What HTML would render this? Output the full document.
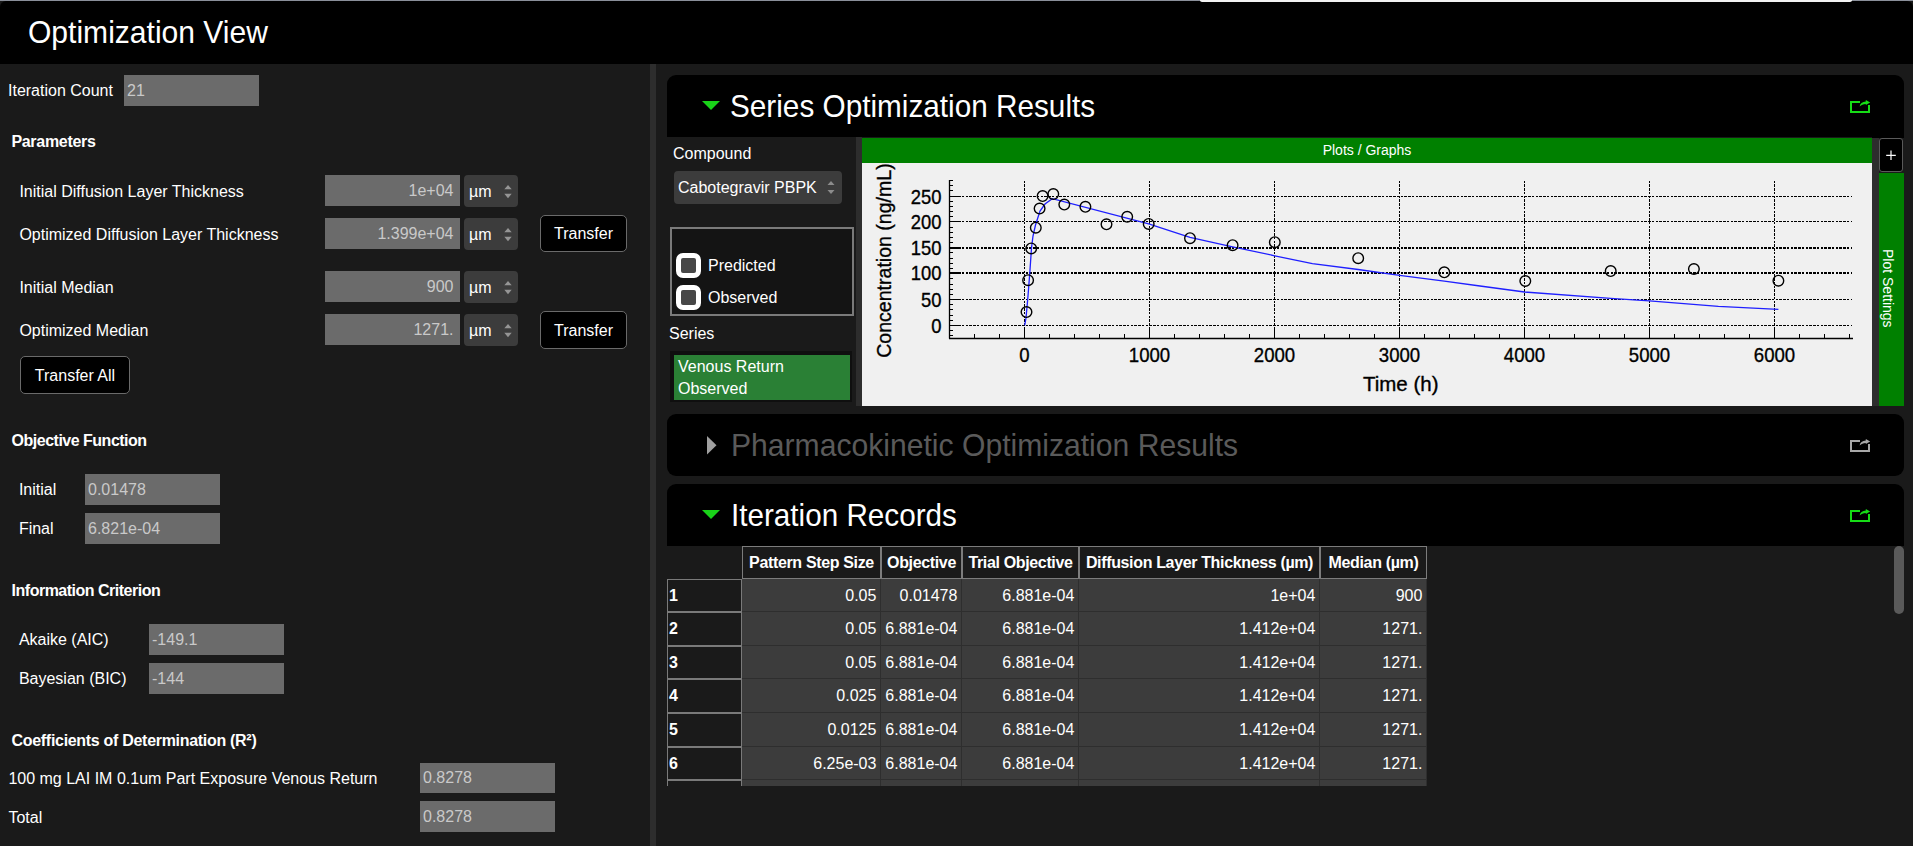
<!DOCTYPE html>
<html><head><meta charset="utf-8"><title>Optimization View</title>
<style>
html,body{margin:0;padding:0;}
body{width:1913px;height:846px;overflow:hidden;background:#1a1a1a;position:relative;font-family:"Liberation Sans",sans-serif;}
body div, body svg{position:absolute;}
.t{line-height:1;white-space:nowrap;}
svg text{font-family:"Liberation Sans",sans-serif;}
</style></head><body>
<div style="left:0px;top:0px;width:1913px;height:1px;background:#8a8f9a"></div>
<div style="left:1200px;top:0px;width:652px;height:2px;background:#f2f2f2;border-radius:0 0 2px 2px"></div>
<div style="left:0px;top:1px;width:1913px;height:63px;background:#000;border-radius:6px 6px 0 0"></div>
<div style="left:1200px;top:0px;width:652px;height:2px;background:#f2f2f2;border-radius:0 0 3px 3px"></div>
<div class="t" style="left:28px;top:16.31px;font-size:32px;color:#fff;font-weight:400;transform:scaleX(0.939);transform-origin:0 0">Optimization View</div>
<div class="t" style="left:8px;top:83.16px;font-size:16px;color:#fff;font-weight:400;">Iteration Count</div>
<div style="left:124px;top:75px;width:135px;height:31px;background:#6b6b6b"></div>
<div class="t" style="left:127px;top:82.96px;font-size:16px;color:#c9c9c9;font-weight:400;">21</div>
<div class="t" style="left:11.4px;top:134.36px;font-size:16px;color:#fff;font-weight:700;letter-spacing:-0.3px">Parameters</div>
<div class="t" style="left:19.4px;top:184.46px;font-size:16px;color:#fff;font-weight:400;">Initial Diffusion Layer Thickness</div>
<div style="left:325px;top:175px;width:135px;height:31px;background:#6b6b6b"></div>
<div class="t" style="right:1459.5px;top:182.96px;font-size:16px;color:#c9c9c9;font-weight:400;">1e+04</div>
<div style="left:464px;top:175px;width:54px;height:32px;background:#3c3c3c;border-radius:4px"></div>
<div class="t" style="left:469px;top:184.26px;font-size:16px;color:#fff;font-weight:400;">&micro;m</div>
<svg style="left:503.5px;top:184.5px" width="8" height="14"><path d="M0.3 4.2 L4 0 L7.7 4.2Z M0.3 8.8 L4 13.2 L7.7 8.8Z" fill="#959595"/></svg>
<div class="t" style="left:19.4px;top:226.66px;font-size:16px;color:#fff;font-weight:400;">Optimized Diffusion Layer Thickness</div>
<div style="left:325px;top:218px;width:135px;height:31px;background:#6b6b6b"></div>
<div class="t" style="right:1459.5px;top:225.96px;font-size:16px;color:#c9c9c9;font-weight:400;">1.399e+04</div>
<div style="left:464px;top:218px;width:54px;height:32px;background:#3c3c3c;border-radius:4px"></div>
<div class="t" style="left:469px;top:227.26px;font-size:16px;color:#fff;font-weight:400;">&micro;m</div>
<svg style="left:503.5px;top:227.5px" width="8" height="14"><path d="M0.3 4.2 L4 0 L7.7 4.2Z M0.3 8.8 L4 13.2 L7.7 8.8Z" fill="#959595"/></svg>
<div style="left:540px;top:215px;width:87px;height:37px;background:#000;border:1px solid #6a6a6a;border-radius:5px;box-sizing:border-box"></div>
<div class="t" style="left:283.5px;width:600px;text-align:center;top:225.96px;font-size:16px;color:#fff;font-weight:400;">Transfer</div>
<div class="t" style="left:19.4px;top:280.06px;font-size:16px;color:#fff;font-weight:400;">Initial Median</div>
<div style="left:325px;top:271px;width:135px;height:31px;background:#6b6b6b"></div>
<div class="t" style="right:1459.5px;top:278.96px;font-size:16px;color:#c9c9c9;font-weight:400;">900</div>
<div style="left:464px;top:271px;width:54px;height:32px;background:#3c3c3c;border-radius:4px"></div>
<div class="t" style="left:469px;top:280.26px;font-size:16px;color:#fff;font-weight:400;">&micro;m</div>
<svg style="left:503.5px;top:280.5px" width="8" height="14"><path d="M0.3 4.2 L4 0 L7.7 4.2Z M0.3 8.8 L4 13.2 L7.7 8.8Z" fill="#959595"/></svg>
<div class="t" style="left:19.4px;top:323.16px;font-size:16px;color:#fff;font-weight:400;">Optimized Median</div>
<div style="left:325px;top:314px;width:135px;height:31px;background:#6b6b6b"></div>
<div class="t" style="right:1459.5px;top:321.96px;font-size:16px;color:#c9c9c9;font-weight:400;">1271.</div>
<div style="left:464px;top:314px;width:54px;height:32px;background:#3c3c3c;border-radius:4px"></div>
<div class="t" style="left:469px;top:323.26px;font-size:16px;color:#fff;font-weight:400;">&micro;m</div>
<svg style="left:503.5px;top:323.5px" width="8" height="14"><path d="M0.3 4.2 L4 0 L7.7 4.2Z M0.3 8.8 L4 13.2 L7.7 8.8Z" fill="#959595"/></svg>
<div style="left:540px;top:311px;width:87px;height:38px;background:#000;border:1px solid #6a6a6a;border-radius:5px;box-sizing:border-box"></div>
<div class="t" style="left:283.5px;width:600px;text-align:center;top:323.06px;font-size:16px;color:#fff;font-weight:400;">Transfer</div>
<div style="left:20px;top:356px;width:110px;height:38px;background:#000;border:1px solid #6a6a6a;border-radius:5px;box-sizing:border-box"></div>
<div class="t" style="left:-225.0px;width:600px;text-align:center;top:368.06px;font-size:16px;color:#fff;font-weight:400;">Transfer All</div>
<div class="t" style="left:11.6px;top:432.76px;font-size:16px;color:#fff;font-weight:700;letter-spacing:-0.5px">Objective Function</div>
<div class="t" style="left:18.9px;top:481.76px;font-size:16px;color:#fff;font-weight:400;">Initial</div>
<div style="left:85px;top:474px;width:135px;height:31px;background:#6b6b6b"></div>
<div class="t" style="left:88px;top:481.96px;font-size:16px;color:#c9c9c9;font-weight:400;">0.01478</div>
<div class="t" style="left:18.9px;top:521.46px;font-size:16px;color:#fff;font-weight:400;">Final</div>
<div style="left:85px;top:513px;width:135px;height:31px;background:#6b6b6b"></div>
<div class="t" style="left:88px;top:520.96px;font-size:16px;color:#c9c9c9;font-weight:400;">6.821e-04</div>
<div class="t" style="left:11.6px;top:583.46px;font-size:16px;color:#fff;font-weight:700;letter-spacing:-0.5px">Information Criterion</div>
<div class="t" style="left:18.9px;top:632.46px;font-size:16px;color:#fff;font-weight:400;">Akaike (AIC)</div>
<div style="left:149px;top:624px;width:135px;height:31px;background:#6b6b6b"></div>
<div class="t" style="left:152px;top:631.96px;font-size:16px;color:#c9c9c9;font-weight:400;">-149.1</div>
<div class="t" style="left:18.9px;top:671.46px;font-size:16px;color:#fff;font-weight:400;">Bayesian (BIC)</div>
<div style="left:149px;top:663px;width:135px;height:31px;background:#6b6b6b"></div>
<div class="t" style="left:152px;top:670.96px;font-size:16px;color:#c9c9c9;font-weight:400;">-144</div>
<div class="t" style="left:11.5px;top:732.66px;font-size:16px;color:#fff;font-weight:700;letter-spacing:-0.3px">Coefficients of Determination (R&sup2;)</div>
<div class="t" style="left:8.4px;top:771.36px;font-size:16px;color:#fff;font-weight:400;">100 mg LAI IM 0.1um Part Exposure Venous Return</div>
<div style="left:420px;top:763px;width:135px;height:30px;background:#6b6b6b"></div>
<div class="t" style="left:423px;top:770.46px;font-size:16px;color:#c9c9c9;font-weight:400;">0.8278</div>
<div class="t" style="left:8.4px;top:810.26px;font-size:16px;color:#fff;font-weight:400;">Total</div>
<div style="left:420px;top:801px;width:135px;height:31px;background:#6b6b6b"></div>
<div class="t" style="left:423px;top:808.96px;font-size:16px;color:#c9c9c9;font-weight:400;">0.8278</div>
<div style="left:650px;top:64px;width:6px;height:782px;background:#2d2d2d"></div>
<div style="left:667px;top:75px;width:1237px;height:62px;background:#000;border-radius:9px 9px 0 0"></div>
<svg style="left:702px;top:101px" width="18" height="9"><path d="M0 0 H18 L9.0 9Z" fill="#19d219"/></svg>
<div class="t" style="left:730px;top:89.61px;font-size:32px;color:#fff;font-weight:400;transform:scaleX(0.929);transform-origin:0 0">Series Optimization Results</div>
<svg style="left:1850px;top:100px" width="21" height="14" viewBox="0 0 21 14"><path d="M10 2 H1 V12 H19 V5" fill="none" stroke="#16dc16" stroke-width="2"/><path d="M9.6 6.6 C10 3.6 12.4 1.7 15.8 1.5 V0 L20.2 2.5 L15.8 5 V3.9 C13.3 3.9 11.4 4.8 9.6 6.6Z" fill="#16dc16"/></svg>
<div class="t" style="left:673px;top:146.16px;font-size:16px;color:#fff;font-weight:400;">Compound</div>
<div style="left:674px;top:171px;width:168px;height:33px;background:#3c3c3c;border-radius:4px"></div>
<div class="t" style="left:678px;top:179.76px;font-size:16px;color:#fff;font-weight:400;">Cabotegravir PBPK</div>
<svg style="left:827px;top:181px" width="8" height="14"><path d="M0.5 4 L4 0 L7.5 4Z M0.5 9 L4 13 L7.5 9Z" fill="#8c8c8c"/></svg>
<div style="left:670px;top:227px;width:184px;height:89px;background:#141414;border:2px solid #7a7a7a;box-sizing:border-box"></div>
<div style="left:676px;top:253px;width:25px;height:25px;background:#474747;border:5px solid #fff;border-radius:7px;box-sizing:border-box"></div>
<div style="left:676px;top:285px;width:25px;height:25px;background:#474747;border:5px solid #fff;border-radius:7px;box-sizing:border-box"></div>
<div class="t" style="left:708px;top:258.46px;font-size:16px;color:#fff;font-weight:400;">Predicted</div>
<div class="t" style="left:708px;top:290.36px;font-size:16px;color:#fff;font-weight:400;">Observed</div>
<div class="t" style="left:669px;top:325.86px;font-size:16px;color:#fff;font-weight:400;">Series</div>
<div style="left:670px;top:351px;width:182px;height:51px;background:#0f0f0f"></div>
<div style="left:674px;top:355px;width:176px;height:45px;background:#2a8035"></div>
<div class="t" style="left:678px;top:359.06px;font-size:16px;color:#fff;font-weight:400;">Venous Return</div>
<div class="t" style="left:678px;top:380.66px;font-size:16px;color:#fff;font-weight:400;">Observed</div>
<div style="left:856px;top:137px;width:6px;height:269px;background:#2d2d2d"></div>
<div style="left:862px;top:138px;width:1010px;height:25px;background:#008000"></div>
<div class="t" style="left:1067px;width:600px;text-align:center;top:142.85px;font-size:14px;color:#fff;font-weight:400;">Plots / Graphs</div>
<div style="left:862px;top:163px;width:1010px;height:243px;background:#f0f0f0"></div>
<div style="left:1872px;top:137px;width:7px;height:269px;background:#2d2d2d"></div>
<div style="left:1879px;top:138px;width:24px;height:34px;background:#000;border:1px solid #5a5a5a;border-radius:3px;box-sizing:border-box"></div>
<svg style="left:1884px;top:148px" width="14" height="14"><path d="M7 2.5 V12 M2.2 7.3 H11.8" stroke="#fff" stroke-width="1.2"/></svg>
<div style="left:1879px;top:173px;width:25px;height:233px;background:#008000"></div>
<div class="t" style="left:1895.3px;top:249px;font-size:14px;color:#fff;transform-origin:0 0;transform:rotate(90deg);white-space:nowrap">Plot Settings</div>
<div style="left:1872px;top:137px;width:32px;height:1px;background:#000"></div>
<svg style="left:862px;top:163px" width="1010" height="243" viewBox="862 163 1010 243"><line x1="951" y1="325.5" x2="1852" y2="325.5" stroke="#000" stroke-width="1" stroke-dasharray="2 1 3 1 3 1 2 2"/><line x1="951" y1="299.5" x2="1852" y2="299.5" stroke="#000" stroke-width="1" stroke-dasharray="2 1 3 1 3 1 2 2"/><line x1="951" y1="273" x2="1852" y2="273" stroke="#000" stroke-width="2" stroke-dasharray="2 1 3 1 3 1 2 2"/><line x1="951" y1="248" x2="1852" y2="248" stroke="#000" stroke-width="2" stroke-dasharray="2 1 3 1 3 1 2 2"/><line x1="951" y1="221.5" x2="1852" y2="221.5" stroke="#000" stroke-width="1" stroke-dasharray="2 1 3 1 3 1 2 2"/><line x1="951" y1="196.5" x2="1852" y2="196.5" stroke="#000" stroke-width="1" stroke-dasharray="2 1 3 1 3 1 2 2"/><line x1="1024.5" y1="181" x2="1024.5" y2="338" stroke="#000" stroke-width="1" stroke-dasharray="2 1 3 1 3 1 2 2"/><line x1="1149.5" y1="181" x2="1149.5" y2="338" stroke="#000" stroke-width="1" stroke-dasharray="2 1 3 1 3 1 2 2"/><line x1="1274.5" y1="181" x2="1274.5" y2="338" stroke="#000" stroke-width="1" stroke-dasharray="2 1 3 1 3 1 2 2"/><line x1="1399.5" y1="181" x2="1399.5" y2="338" stroke="#000" stroke-width="1" stroke-dasharray="2 1 3 1 3 1 2 2"/><line x1="1524.5" y1="181" x2="1524.5" y2="338" stroke="#000" stroke-width="1" stroke-dasharray="2 1 3 1 3 1 2 2"/><line x1="1649.5" y1="181" x2="1649.5" y2="338" stroke="#000" stroke-width="1" stroke-dasharray="2 1 3 1 3 1 2 2"/><line x1="1774.5" y1="181" x2="1774.5" y2="338" stroke="#000" stroke-width="1" stroke-dasharray="2 1 3 1 3 1 2 2"/><line x1="949.5" y1="180" x2="949.5" y2="338.5" stroke="#000" stroke-width="1.3"/><line x1="949" y1="338.5" x2="1853" y2="338.5" stroke="#000" stroke-width="1.3"/><line x1="949" y1="335.5" x2="953" y2="335.5" stroke="#000" stroke-width="1"/><line x1="949" y1="330.5" x2="953" y2="330.5" stroke="#000" stroke-width="1"/><line x1="949" y1="325.5" x2="958" y2="325.5" stroke="#000" stroke-width="1"/><line x1="949" y1="320.5" x2="953" y2="320.5" stroke="#000" stroke-width="1"/><line x1="949" y1="315.5" x2="953" y2="315.5" stroke="#000" stroke-width="1"/><line x1="949" y1="309.5" x2="953" y2="309.5" stroke="#000" stroke-width="1"/><line x1="949" y1="304.5" x2="953" y2="304.5" stroke="#000" stroke-width="1"/><line x1="949" y1="299.5" x2="958" y2="299.5" stroke="#000" stroke-width="1"/><line x1="949" y1="294.5" x2="953" y2="294.5" stroke="#000" stroke-width="1"/><line x1="949" y1="289.5" x2="953" y2="289.5" stroke="#000" stroke-width="1"/><line x1="949" y1="284.5" x2="953" y2="284.5" stroke="#000" stroke-width="1"/><line x1="949" y1="278.5" x2="953" y2="278.5" stroke="#000" stroke-width="1"/><line x1="949" y1="273" x2="958" y2="273" stroke="#000" stroke-width="2"/><line x1="949" y1="268.5" x2="953" y2="268.5" stroke="#000" stroke-width="1"/><line x1="949" y1="263.5" x2="953" y2="263.5" stroke="#000" stroke-width="1"/><line x1="949" y1="258.5" x2="953" y2="258.5" stroke="#000" stroke-width="1"/><line x1="949" y1="252.5" x2="953" y2="252.5" stroke="#000" stroke-width="1"/><line x1="949" y1="248" x2="958" y2="248" stroke="#000" stroke-width="2"/><line x1="949" y1="242.5" x2="953" y2="242.5" stroke="#000" stroke-width="1"/><line x1="949" y1="237.5" x2="953" y2="237.5" stroke="#000" stroke-width="1"/><line x1="949" y1="232.5" x2="953" y2="232.5" stroke="#000" stroke-width="1"/><line x1="949" y1="227.5" x2="953" y2="227.5" stroke="#000" stroke-width="1"/><line x1="949" y1="221.5" x2="958" y2="221.5" stroke="#000" stroke-width="1"/><line x1="949" y1="216.5" x2="953" y2="216.5" stroke="#000" stroke-width="1"/><line x1="949" y1="211.5" x2="953" y2="211.5" stroke="#000" stroke-width="1"/><line x1="949" y1="206.5" x2="953" y2="206.5" stroke="#000" stroke-width="1"/><line x1="949" y1="201.5" x2="953" y2="201.5" stroke="#000" stroke-width="1"/><line x1="949" y1="196.5" x2="958" y2="196.5" stroke="#000" stroke-width="1"/><line x1="949" y1="190.5" x2="953" y2="190.5" stroke="#000" stroke-width="1"/><line x1="949" y1="185.5" x2="953" y2="185.5" stroke="#000" stroke-width="1"/><line x1="949" y1="180.5" x2="953" y2="180.5" stroke="#000" stroke-width="1"/><line x1="949.5" y1="338" x2="949.5" y2="334" stroke="#000" stroke-width="1"/><line x1="974.5" y1="338" x2="974.5" y2="334" stroke="#000" stroke-width="1"/><line x1="999.5" y1="338" x2="999.5" y2="334" stroke="#000" stroke-width="1"/><line x1="1024.5" y1="338" x2="1024.5" y2="329" stroke="#000" stroke-width="1"/><line x1="1049.5" y1="338" x2="1049.5" y2="334" stroke="#000" stroke-width="1"/><line x1="1074.5" y1="338" x2="1074.5" y2="334" stroke="#000" stroke-width="1"/><line x1="1099.5" y1="338" x2="1099.5" y2="334" stroke="#000" stroke-width="1"/><line x1="1124.5" y1="338" x2="1124.5" y2="334" stroke="#000" stroke-width="1"/><line x1="1149.5" y1="338" x2="1149.5" y2="329" stroke="#000" stroke-width="1"/><line x1="1174.5" y1="338" x2="1174.5" y2="334" stroke="#000" stroke-width="1"/><line x1="1199.5" y1="338" x2="1199.5" y2="334" stroke="#000" stroke-width="1"/><line x1="1224.5" y1="338" x2="1224.5" y2="334" stroke="#000" stroke-width="1"/><line x1="1249.5" y1="338" x2="1249.5" y2="334" stroke="#000" stroke-width="1"/><line x1="1274.5" y1="338" x2="1274.5" y2="329" stroke="#000" stroke-width="1"/><line x1="1299.5" y1="338" x2="1299.5" y2="334" stroke="#000" stroke-width="1"/><line x1="1324.5" y1="338" x2="1324.5" y2="334" stroke="#000" stroke-width="1"/><line x1="1349.5" y1="338" x2="1349.5" y2="334" stroke="#000" stroke-width="1"/><line x1="1374.5" y1="338" x2="1374.5" y2="334" stroke="#000" stroke-width="1"/><line x1="1399.5" y1="338" x2="1399.5" y2="329" stroke="#000" stroke-width="1"/><line x1="1424.5" y1="338" x2="1424.5" y2="334" stroke="#000" stroke-width="1"/><line x1="1449.5" y1="338" x2="1449.5" y2="334" stroke="#000" stroke-width="1"/><line x1="1474.5" y1="338" x2="1474.5" y2="334" stroke="#000" stroke-width="1"/><line x1="1499.5" y1="338" x2="1499.5" y2="334" stroke="#000" stroke-width="1"/><line x1="1524.5" y1="338" x2="1524.5" y2="329" stroke="#000" stroke-width="1"/><line x1="1549.5" y1="338" x2="1549.5" y2="334" stroke="#000" stroke-width="1"/><line x1="1574.5" y1="338" x2="1574.5" y2="334" stroke="#000" stroke-width="1"/><line x1="1599.5" y1="338" x2="1599.5" y2="334" stroke="#000" stroke-width="1"/><line x1="1624.5" y1="338" x2="1624.5" y2="334" stroke="#000" stroke-width="1"/><line x1="1649.5" y1="338" x2="1649.5" y2="329" stroke="#000" stroke-width="1"/><line x1="1674.5" y1="338" x2="1674.5" y2="334" stroke="#000" stroke-width="1"/><line x1="1699.5" y1="338" x2="1699.5" y2="334" stroke="#000" stroke-width="1"/><line x1="1724.5" y1="338" x2="1724.5" y2="334" stroke="#000" stroke-width="1"/><line x1="1749.5" y1="338" x2="1749.5" y2="334" stroke="#000" stroke-width="1"/><line x1="1774.5" y1="338" x2="1774.5" y2="329" stroke="#000" stroke-width="1"/><line x1="1799.5" y1="338" x2="1799.5" y2="334" stroke="#000" stroke-width="1"/><line x1="1824.5" y1="338" x2="1824.5" y2="334" stroke="#000" stroke-width="1"/><line x1="1849.5" y1="338" x2="1849.5" y2="334" stroke="#000" stroke-width="1"/><text x="941.5" y="332.9" font-size="20.8" text-anchor="end" textLength="10.25" lengthAdjust="spacingAndGlyphs" stroke="#000" stroke-width="0.35">0</text><text x="941.5" y="306.9" font-size="20.8" text-anchor="end" textLength="20.5" lengthAdjust="spacingAndGlyphs" stroke="#000" stroke-width="0.35">50</text><text x="941.5" y="280.4" font-size="20.8" text-anchor="end" textLength="30.75" lengthAdjust="spacingAndGlyphs" stroke="#000" stroke-width="0.35">100</text><text x="941.5" y="255.4" font-size="20.8" text-anchor="end" textLength="30.75" lengthAdjust="spacingAndGlyphs" stroke="#000" stroke-width="0.35">150</text><text x="941.5" y="228.9" font-size="20.8" text-anchor="end" textLength="30.75" lengthAdjust="spacingAndGlyphs" stroke="#000" stroke-width="0.35">200</text><text x="941.5" y="203.9" font-size="20.8" text-anchor="end" textLength="30.75" lengthAdjust="spacingAndGlyphs" stroke="#000" stroke-width="0.35">250</text><text x="1024.5" y="361.9" font-size="20.8" text-anchor="middle" textLength="10.35" lengthAdjust="spacingAndGlyphs" stroke="#000" stroke-width="0.35">0</text><text x="1149.5" y="361.9" font-size="20.8" text-anchor="middle" textLength="41.4" lengthAdjust="spacingAndGlyphs" stroke="#000" stroke-width="0.35">1000</text><text x="1274.5" y="361.9" font-size="20.8" text-anchor="middle" textLength="41.4" lengthAdjust="spacingAndGlyphs" stroke="#000" stroke-width="0.35">2000</text><text x="1399.5" y="361.9" font-size="20.8" text-anchor="middle" textLength="41.4" lengthAdjust="spacingAndGlyphs" stroke="#000" stroke-width="0.35">3000</text><text x="1524.5" y="361.9" font-size="20.8" text-anchor="middle" textLength="41.4" lengthAdjust="spacingAndGlyphs" stroke="#000" stroke-width="0.35">4000</text><text x="1649.5" y="361.9" font-size="20.8" text-anchor="middle" textLength="41.4" lengthAdjust="spacingAndGlyphs" stroke="#000" stroke-width="0.35">5000</text><text x="1774.5" y="361.9" font-size="20.8" text-anchor="middle" textLength="41.4" lengthAdjust="spacingAndGlyphs" stroke="#000" stroke-width="0.35">6000</text><text x="1363" y="390.9" font-size="21" textLength="75.5" lengthAdjust="spacingAndGlyphs" stroke="#000" stroke-width="0.35">Time (h)</text><text transform="translate(891.3,357.8) rotate(-90)" font-size="20.5" textLength="194.5" lengthAdjust="spacingAndGlyphs" stroke="#000" stroke-width="0.35">Concentration (ng/mL)</text><polyline fill="none" stroke="#1f1fff" stroke-width="1.3" points="1024.7,325.4 1026,318 1028,296 1030,270 1031.5,248 1033,236 1035.5,225 1040,211 1045,204 1052.3,198.7 1148.7,223.9 1190,237.3 1232.6,246.8 1274.8,255.8 1312.4,263.7 1358.2,269.5 1399.6,275.3 1444.3,281.1 1480,286 1524.5,292 1610.7,298.3 1649.4,300.9 1718.4,306.3 1778.4,309.3"/><circle cx="1026.5" cy="312.1" r="5.3" fill="none" stroke="#000" stroke-width="1.4"/><circle cx="1028.1" cy="280.2" r="5.3" fill="none" stroke="#000" stroke-width="1.4"/><circle cx="1031.2" cy="248.4" r="5.3" fill="none" stroke="#000" stroke-width="1.4"/><circle cx="1035.8" cy="227.7" r="5.3" fill="none" stroke="#000" stroke-width="1.4"/><circle cx="1039.6" cy="208.6" r="5.3" fill="none" stroke="#000" stroke-width="1.4"/><circle cx="1042.6" cy="196.1" r="5.3" fill="none" stroke="#000" stroke-width="1.4"/><circle cx="1053.3" cy="194.1" r="5.3" fill="none" stroke="#000" stroke-width="1.4"/><circle cx="1064.3" cy="204.6" r="5.3" fill="none" stroke="#000" stroke-width="1.4"/><circle cx="1085.4" cy="206.8" r="5.3" fill="none" stroke="#000" stroke-width="1.4"/><circle cx="1106.5" cy="224.3" r="5.3" fill="none" stroke="#000" stroke-width="1.4"/><circle cx="1127.2" cy="216.8" r="5.3" fill="none" stroke="#000" stroke-width="1.4"/><circle cx="1148.7" cy="223.9" r="5.3" fill="none" stroke="#000" stroke-width="1.4"/><circle cx="1190" cy="238.2" r="5.3" fill="none" stroke="#000" stroke-width="1.4"/><circle cx="1232.6" cy="245.2" r="5.3" fill="none" stroke="#000" stroke-width="1.4"/><circle cx="1274.8" cy="242.2" r="5.3" fill="none" stroke="#000" stroke-width="1.4"/><circle cx="1358.2" cy="258.2" r="5.3" fill="none" stroke="#000" stroke-width="1.4"/><circle cx="1444.3" cy="272.3" r="5.3" fill="none" stroke="#000" stroke-width="1.4"/><circle cx="1525.3" cy="281.0" r="5.3" fill="none" stroke="#000" stroke-width="1.4"/><circle cx="1610.7" cy="271.1" r="5.3" fill="none" stroke="#000" stroke-width="1.4"/><circle cx="1693.9" cy="269.1" r="5.3" fill="none" stroke="#000" stroke-width="1.4"/><circle cx="1778.4" cy="280.7" r="5.3" fill="none" stroke="#000" stroke-width="1.4"/></svg>
<div style="left:667px;top:414px;width:1237px;height:62px;background:#000;border-radius:9px"></div>
<svg style="left:707px;top:436px" width="10" height="19"><path d="M0 0 L9.5 9.25 L0 18.5Z" fill="#a0a0a0"/></svg>
<div class="t" style="left:730.9px;top:428.61px;font-size:32px;color:#5a5a5a;font-weight:400;transform:scaleX(0.941);transform-origin:0 0">Pharmacokinetic Optimization Results</div>
<svg style="left:1850px;top:439px" width="21" height="14" viewBox="0 0 21 14"><path d="M10 2 H1 V12 H19 V5" fill="none" stroke="#a8a8a8" stroke-width="2"/><path d="M9.6 6.6 C10 3.6 12.4 1.7 15.8 1.5 V0 L20.2 2.5 L15.8 5 V3.9 C13.3 3.9 11.4 4.8 9.6 6.6Z" fill="#a8a8a8"/></svg>
<div style="left:667px;top:484px;width:1237px;height:62px;background:#000;border-radius:9px 9px 0 0"></div>
<svg style="left:702px;top:510px" width="18" height="9"><path d="M0 0 H18 L9.0 9Z" fill="#19d219"/></svg>
<div class="t" style="left:731.3px;top:498.61px;font-size:32px;color:#fff;font-weight:400;transform:scaleX(0.927);transform-origin:0 0">Iteration Records</div>
<svg style="left:1850px;top:509px" width="21" height="14" viewBox="0 0 21 14"><path d="M10 2 H1 V12 H19 V5" fill="none" stroke="#16dc16" stroke-width="2"/><path d="M9.6 6.6 C10 3.6 12.4 1.7 15.8 1.5 V0 L20.2 2.5 L15.8 5 V3.9 C13.3 3.9 11.4 4.8 9.6 6.6Z" fill="#16dc16"/></svg>
<div style="left:1894px;top:546px;width:10px;height:68px;background:#5a5a5a;border-radius:5px"></div>
<div style="left:667px;top:546px;width:760px;height:240px;overflow:hidden"><div style="left:75px;top:0px;width:139px;height:33px;background:#1a1a1a;border:1px solid #7c7c7c;box-sizing:border-box"></div><div class="t" style="left:-55.50px;width:400px;text-align:center;top:9.06px;font-size:16px;color:#fff;font-weight:700;letter-spacing:-0.35px">Pattern Step Size</div><div style="left:214px;top:0px;width:81px;height:33px;background:#1a1a1a;border:1px solid #7c7c7c;box-sizing:border-box"></div><div class="t" style="left:54.50px;width:400px;text-align:center;top:9.06px;font-size:16px;color:#fff;font-weight:700;letter-spacing:-0.35px">Objective</div><div style="left:295px;top:0px;width:117px;height:33px;background:#1a1a1a;border:1px solid #7c7c7c;box-sizing:border-box"></div><div class="t" style="left:153.50px;width:400px;text-align:center;top:9.06px;font-size:16px;color:#fff;font-weight:700;letter-spacing:-0.35px">Trial Objective</div><div style="left:412px;top:0px;width:241px;height:33px;background:#1a1a1a;border:1px solid #7c7c7c;box-sizing:border-box"></div><div class="t" style="left:332.50px;width:400px;text-align:center;top:9.06px;font-size:16px;color:#fff;font-weight:700;letter-spacing:-0.35px">Diffusion Layer Thickness (&micro;m)</div><div style="left:653px;top:0px;width:107px;height:33px;background:#1a1a1a;border:1px solid #7c7c7c;box-sizing:border-box"></div><div class="t" style="left:506.50px;width:400px;text-align:center;top:9.06px;font-size:16px;color:#fff;font-weight:700;letter-spacing:-0.35px">Median (&micro;m)</div><div style="left:0px;top:33px;width:75px;height:33px;background:#1a1a1a;border:1px solid #7a7a7a;box-sizing:border-box"></div><div style="left:75px;top:33px;width:684px;height:33px;background:#3c3c3c"></div><div style="left:75px;top:33px;width:139px;height:33px;border-right:1px solid #2e2e2e;border-bottom:1px solid #2e2e2e;box-sizing:border-box"></div><div class="t" style="left:-90.60px;width:300px;text-align:right;top:41.76px;font-size:16px;color:#fff;font-weight:400;">0.05</div><div style="left:214px;top:33px;width:81px;height:33px;border-right:1px solid #2e2e2e;border-bottom:1px solid #2e2e2e;box-sizing:border-box"></div><div class="t" style="left:-9.60px;width:300px;text-align:right;top:41.76px;font-size:16px;color:#fff;font-weight:400;">0.01478</div><div style="left:295px;top:33px;width:117px;height:33px;border-right:1px solid #2e2e2e;border-bottom:1px solid #2e2e2e;box-sizing:border-box"></div><div class="t" style="left:107.40px;width:300px;text-align:right;top:41.76px;font-size:16px;color:#fff;font-weight:400;">6.881e-04</div><div style="left:412px;top:33px;width:241px;height:33px;border-right:1px solid #2e2e2e;border-bottom:1px solid #2e2e2e;box-sizing:border-box"></div><div class="t" style="left:348.40px;width:300px;text-align:right;top:41.76px;font-size:16px;color:#fff;font-weight:400;">1e+04</div><div style="left:653px;top:33px;width:107px;height:33px;border-right:1px solid #2e2e2e;border-bottom:1px solid #2e2e2e;box-sizing:border-box"></div><div class="t" style="left:455.40px;width:300px;text-align:right;top:41.76px;font-size:16px;color:#fff;font-weight:400;">900</div><div class="t" style="left:2px;top:41.76px;font-size:16px;color:#fff;font-weight:700;">1</div><div style="left:0px;top:66px;width:75px;height:34px;background:#1a1a1a;border:1px solid #7a7a7a;box-sizing:border-box"></div><div style="left:75px;top:66px;width:684px;height:34px;background:#3c3c3c"></div><div style="left:75px;top:66px;width:139px;height:34px;border-right:1px solid #2e2e2e;border-bottom:1px solid #2e2e2e;box-sizing:border-box"></div><div class="t" style="left:-90.60px;width:300px;text-align:right;top:74.76px;font-size:16px;color:#fff;font-weight:400;">0.05</div><div style="left:214px;top:66px;width:81px;height:34px;border-right:1px solid #2e2e2e;border-bottom:1px solid #2e2e2e;box-sizing:border-box"></div><div class="t" style="left:-9.60px;width:300px;text-align:right;top:74.76px;font-size:16px;color:#fff;font-weight:400;">6.881e-04</div><div style="left:295px;top:66px;width:117px;height:34px;border-right:1px solid #2e2e2e;border-bottom:1px solid #2e2e2e;box-sizing:border-box"></div><div class="t" style="left:107.40px;width:300px;text-align:right;top:74.76px;font-size:16px;color:#fff;font-weight:400;">6.881e-04</div><div style="left:412px;top:66px;width:241px;height:34px;border-right:1px solid #2e2e2e;border-bottom:1px solid #2e2e2e;box-sizing:border-box"></div><div class="t" style="left:348.40px;width:300px;text-align:right;top:74.76px;font-size:16px;color:#fff;font-weight:400;">1.412e+04</div><div style="left:653px;top:66px;width:107px;height:34px;border-right:1px solid #2e2e2e;border-bottom:1px solid #2e2e2e;box-sizing:border-box"></div><div class="t" style="left:455.40px;width:300px;text-align:right;top:74.76px;font-size:16px;color:#fff;font-weight:400;">1271.</div><div class="t" style="left:2px;top:74.76px;font-size:16px;color:#fff;font-weight:700;">2</div><div style="left:0px;top:100px;width:75px;height:33px;background:#1a1a1a;border:1px solid #7a7a7a;box-sizing:border-box"></div><div style="left:75px;top:100px;width:684px;height:33px;background:#3c3c3c"></div><div style="left:75px;top:100px;width:139px;height:33px;border-right:1px solid #2e2e2e;border-bottom:1px solid #2e2e2e;box-sizing:border-box"></div><div class="t" style="left:-90.60px;width:300px;text-align:right;top:108.76px;font-size:16px;color:#fff;font-weight:400;">0.05</div><div style="left:214px;top:100px;width:81px;height:33px;border-right:1px solid #2e2e2e;border-bottom:1px solid #2e2e2e;box-sizing:border-box"></div><div class="t" style="left:-9.60px;width:300px;text-align:right;top:108.76px;font-size:16px;color:#fff;font-weight:400;">6.881e-04</div><div style="left:295px;top:100px;width:117px;height:33px;border-right:1px solid #2e2e2e;border-bottom:1px solid #2e2e2e;box-sizing:border-box"></div><div class="t" style="left:107.40px;width:300px;text-align:right;top:108.76px;font-size:16px;color:#fff;font-weight:400;">6.881e-04</div><div style="left:412px;top:100px;width:241px;height:33px;border-right:1px solid #2e2e2e;border-bottom:1px solid #2e2e2e;box-sizing:border-box"></div><div class="t" style="left:348.40px;width:300px;text-align:right;top:108.76px;font-size:16px;color:#fff;font-weight:400;">1.412e+04</div><div style="left:653px;top:100px;width:107px;height:33px;border-right:1px solid #2e2e2e;border-bottom:1px solid #2e2e2e;box-sizing:border-box"></div><div class="t" style="left:455.40px;width:300px;text-align:right;top:108.76px;font-size:16px;color:#fff;font-weight:400;">1271.</div><div class="t" style="left:2px;top:108.76px;font-size:16px;color:#fff;font-weight:700;">3</div><div style="left:0px;top:133px;width:75px;height:34px;background:#1a1a1a;border:1px solid #7a7a7a;box-sizing:border-box"></div><div style="left:75px;top:133px;width:684px;height:34px;background:#3c3c3c"></div><div style="left:75px;top:133px;width:139px;height:34px;border-right:1px solid #2e2e2e;border-bottom:1px solid #2e2e2e;box-sizing:border-box"></div><div class="t" style="left:-90.60px;width:300px;text-align:right;top:141.76px;font-size:16px;color:#fff;font-weight:400;">0.025</div><div style="left:214px;top:133px;width:81px;height:34px;border-right:1px solid #2e2e2e;border-bottom:1px solid #2e2e2e;box-sizing:border-box"></div><div class="t" style="left:-9.60px;width:300px;text-align:right;top:141.76px;font-size:16px;color:#fff;font-weight:400;">6.881e-04</div><div style="left:295px;top:133px;width:117px;height:34px;border-right:1px solid #2e2e2e;border-bottom:1px solid #2e2e2e;box-sizing:border-box"></div><div class="t" style="left:107.40px;width:300px;text-align:right;top:141.76px;font-size:16px;color:#fff;font-weight:400;">6.881e-04</div><div style="left:412px;top:133px;width:241px;height:34px;border-right:1px solid #2e2e2e;border-bottom:1px solid #2e2e2e;box-sizing:border-box"></div><div class="t" style="left:348.40px;width:300px;text-align:right;top:141.76px;font-size:16px;color:#fff;font-weight:400;">1.412e+04</div><div style="left:653px;top:133px;width:107px;height:34px;border-right:1px solid #2e2e2e;border-bottom:1px solid #2e2e2e;box-sizing:border-box"></div><div class="t" style="left:455.40px;width:300px;text-align:right;top:141.76px;font-size:16px;color:#fff;font-weight:400;">1271.</div><div class="t" style="left:2px;top:141.76px;font-size:16px;color:#fff;font-weight:700;">4</div><div style="left:0px;top:167px;width:75px;height:34px;background:#1a1a1a;border:1px solid #7a7a7a;box-sizing:border-box"></div><div style="left:75px;top:167px;width:684px;height:34px;background:#3c3c3c"></div><div style="left:75px;top:167px;width:139px;height:34px;border-right:1px solid #2e2e2e;border-bottom:1px solid #2e2e2e;box-sizing:border-box"></div><div class="t" style="left:-90.60px;width:300px;text-align:right;top:175.76px;font-size:16px;color:#fff;font-weight:400;">0.0125</div><div style="left:214px;top:167px;width:81px;height:34px;border-right:1px solid #2e2e2e;border-bottom:1px solid #2e2e2e;box-sizing:border-box"></div><div class="t" style="left:-9.60px;width:300px;text-align:right;top:175.76px;font-size:16px;color:#fff;font-weight:400;">6.881e-04</div><div style="left:295px;top:167px;width:117px;height:34px;border-right:1px solid #2e2e2e;border-bottom:1px solid #2e2e2e;box-sizing:border-box"></div><div class="t" style="left:107.40px;width:300px;text-align:right;top:175.76px;font-size:16px;color:#fff;font-weight:400;">6.881e-04</div><div style="left:412px;top:167px;width:241px;height:34px;border-right:1px solid #2e2e2e;border-bottom:1px solid #2e2e2e;box-sizing:border-box"></div><div class="t" style="left:348.40px;width:300px;text-align:right;top:175.76px;font-size:16px;color:#fff;font-weight:400;">1.412e+04</div><div style="left:653px;top:167px;width:107px;height:34px;border-right:1px solid #2e2e2e;border-bottom:1px solid #2e2e2e;box-sizing:border-box"></div><div class="t" style="left:455.40px;width:300px;text-align:right;top:175.76px;font-size:16px;color:#fff;font-weight:400;">1271.</div><div class="t" style="left:2px;top:175.76px;font-size:16px;color:#fff;font-weight:700;">5</div><div style="left:0px;top:201px;width:75px;height:33px;background:#1a1a1a;border:1px solid #7a7a7a;box-sizing:border-box"></div><div style="left:75px;top:201px;width:684px;height:33px;background:#3c3c3c"></div><div style="left:75px;top:201px;width:139px;height:33px;border-right:1px solid #2e2e2e;border-bottom:1px solid #2e2e2e;box-sizing:border-box"></div><div class="t" style="left:-90.60px;width:300px;text-align:right;top:209.76px;font-size:16px;color:#fff;font-weight:400;">6.25e-03</div><div style="left:214px;top:201px;width:81px;height:33px;border-right:1px solid #2e2e2e;border-bottom:1px solid #2e2e2e;box-sizing:border-box"></div><div class="t" style="left:-9.60px;width:300px;text-align:right;top:209.76px;font-size:16px;color:#fff;font-weight:400;">6.881e-04</div><div style="left:295px;top:201px;width:117px;height:33px;border-right:1px solid #2e2e2e;border-bottom:1px solid #2e2e2e;box-sizing:border-box"></div><div class="t" style="left:107.40px;width:300px;text-align:right;top:209.76px;font-size:16px;color:#fff;font-weight:400;">6.881e-04</div><div style="left:412px;top:201px;width:241px;height:33px;border-right:1px solid #2e2e2e;border-bottom:1px solid #2e2e2e;box-sizing:border-box"></div><div class="t" style="left:348.40px;width:300px;text-align:right;top:209.76px;font-size:16px;color:#fff;font-weight:400;">1.412e+04</div><div style="left:653px;top:201px;width:107px;height:33px;border-right:1px solid #2e2e2e;border-bottom:1px solid #2e2e2e;box-sizing:border-box"></div><div class="t" style="left:455.40px;width:300px;text-align:right;top:209.76px;font-size:16px;color:#fff;font-weight:400;">1271.</div><div class="t" style="left:2px;top:209.76px;font-size:16px;color:#fff;font-weight:700;">6</div><div style="left:0px;top:234px;width:75px;height:34px;background:#1a1a1a;border:1px solid #7a7a7a;box-sizing:border-box"></div><div style="left:75px;top:234px;width:684px;height:34px;background:#3c3c3c"></div><div style="left:75px;top:234px;width:139px;height:34px;border-right:1px solid #2e2e2e;border-bottom:1px solid #2e2e2e;box-sizing:border-box"></div><div style="left:214px;top:234px;width:81px;height:34px;border-right:1px solid #2e2e2e;border-bottom:1px solid #2e2e2e;box-sizing:border-box"></div><div style="left:295px;top:234px;width:117px;height:34px;border-right:1px solid #2e2e2e;border-bottom:1px solid #2e2e2e;box-sizing:border-box"></div><div style="left:412px;top:234px;width:241px;height:34px;border-right:1px solid #2e2e2e;border-bottom:1px solid #2e2e2e;box-sizing:border-box"></div><div style="left:653px;top:234px;width:107px;height:34px;border-right:1px solid #2e2e2e;border-bottom:1px solid #2e2e2e;box-sizing:border-box"></div></div>
</body></html>
